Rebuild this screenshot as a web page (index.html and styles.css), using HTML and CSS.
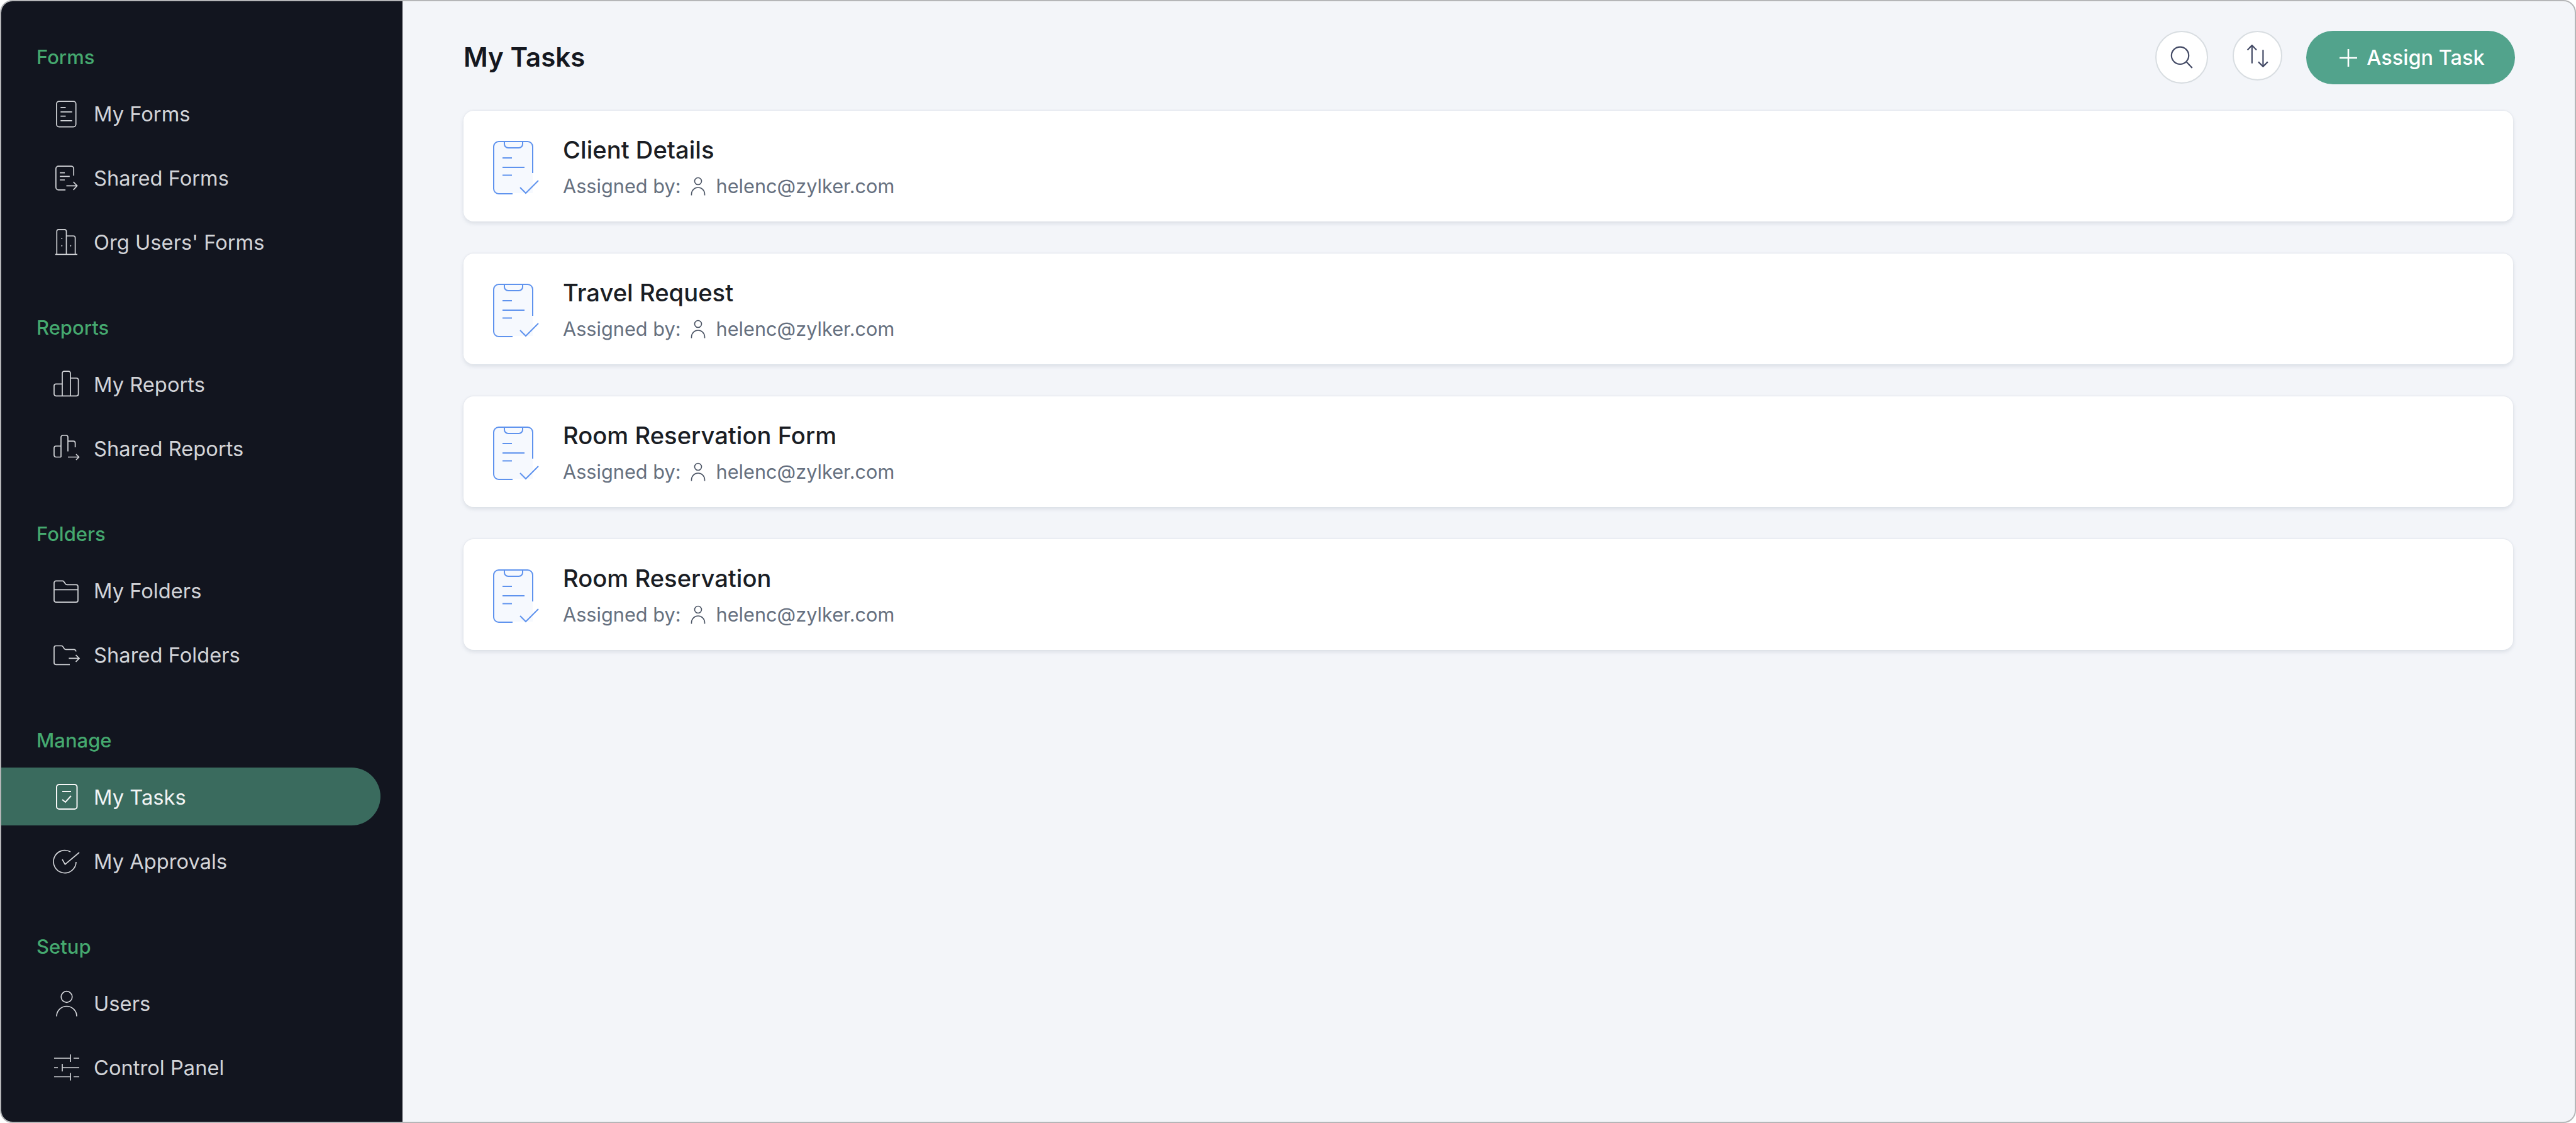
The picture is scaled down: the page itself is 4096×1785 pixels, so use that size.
FILE: index.html
```html
<!DOCTYPE html>
<html>
<head>
  <title>My Tasks</title>
  <link rel="stylesheet" href="styles.css">
</head>
<body>
  <div class="frame">
    <aside class="sidebar">
      <div class="nav-section">
        <div class="nav-label">Forms</div>
        <a class="nav-item"><svg class="nav-icon" viewBox="0 0 44 44"><rect x="5.900" y="2.100" width="30.800" height="40.500" rx="4"/><path d="M12.300 11.900h8.200M12.300 18.800h18.400M12.300 25.600h8.200M12.300 32.800h18.400"/></svg>My Forms</a>
        <a class="nav-item"><svg class="nav-icon" viewBox="0 0 44 44"><path d="M33.200 18.300V7.100a4 4 0 0 0-4-4H8.900a4 4 0 0 0-4 4v29.700a4 4 0 0 0 4 4h11.200"/><path d="M11.100 13.600H19M11.100 19.300h15.700M11.100 25H19M21.500 34.300h17M32.600 28l6 6.300-6 6.500"/></svg>Shared Forms</a>
        <a class="nav-item"><svg class="nav-icon" viewBox="0 0 44 44"><path d="M3.900 41.300H39M6.300 41V4.800a3 3 0 0 1 3-3h9.200a3 3 0 0 1 3 3V41M21.500 12h11.100a3 3 0 0 1 3 3v26"/><path class="dot" d="M14.300 15.900v.1M14.300 27.600v.1M28.300 27.600v.1"/></svg>Org Users' Forms</a>
      </div>
      <div class="nav-section">
        <div class="nav-label">Reports</div>
        <a class="nav-item"><svg class="nav-icon" viewBox="0 0 44 44"><path d="M15 40.300H5a3 3 0 0 1-3-3V24.300a3 3 0 0 1 3-3h10M15 40.300V4.200a3 3 0 0 1 3-3h7a3 3 0 0 1 3 3v36.100M28 12h9.600a3 3 0 0 1 3 3v22.300a3 3 0 0 1-3 3H5"/></svg>My Reports</a>
        <a class="nav-item"><svg class="nav-icon" viewBox="0 0 44 44"><path d="M13 35.500H5a3 3 0 0 1-3-3V21a3 3 0 0 1 3-3h8M13 35.500V4a3 3 0 0 1 3-3h5a3 3 0 0 1 3 3v22.400M24 10.200h8.600a3 3 0 0 1 3 3V20M24 35.500h17.500M37 31l4.500 4.500-4.500 4.500"/></svg>Shared Reports</a>
      </div>
      <div class="nav-section">
        <div class="nav-label">Folders</div>
        <a class="nav-item"><svg class="nav-icon" viewBox="0 0 44 44"><path d="M2 20.300V9.400a3 3 0 0 1 3-3h10.500q1.200 0 2 1l2.500 3.600q1 1.300 2.300 1.300H37a3 3 0 0 1 3 3v21.900a3 3 0 0 1-3 3H5a3 3 0 0 1-3-3z"/><path d="M2 20.300h38"/></svg>My Folders</a>
        <a class="nav-item"><svg class="nav-icon" viewBox="0 0 44 44"><path d="M36.700 16.500a3 3 0 0 0-3-3.100H20.500q-1.300 0-2.200-1.100l-2.200-3.400q-.8-1.400-2.400-1.400H5a3 3 0 0 0-3 3v23.800a3 3 0 0 0 3 3h22"/><path d="M25.400 27.400H42M36.500 22.200l5.500 5.200-5.500 5.500"/></svg>Shared Folders</a>
      </div>
      <div class="nav-section">
        <div class="nav-label">Manage</div>
        <a class="nav-item active"><svg class="nav-icon" viewBox="0 0 44 44"><rect x="6" y="2" width="32.500" height="39" rx="4"/><path d="M15 13h14M15 26l5 4 9-10"/></svg>My Tasks</a>
        <a class="nav-item"><svg class="nav-icon" viewBox="0 0 44 44"><path d="M37 23a18 18 0 1 1-9-16"/><path d="M15 19l4.500 8L42 8"/></svg>My Approvals</a>
      </div>
      <div class="nav-section">
        <div class="nav-label">Setup</div>
        <a class="nav-item"><svg class="nav-icon" viewBox="0 0 44 44"><circle cx="22" cy="11.500" r="8.800"/><path d="M6 42.500a16 16 0 0 1 32 0"/></svg>Users</a>
        <a class="nav-item"><svg class="nav-icon" viewBox="0 0 44 44"><path d="M2 7h26M28 1v12M33 7h9M2 22h6M15 22h27M15 16v12M2 36.500h26M28 30.500v12M33 36.500h9"/></svg>Control Panel</a>
      </div>
    </aside>

    <main class="content">
      <header class="topbar">
        <h1>My Tasks</h1>
        <div class="actions">
          <button class="round-btn search-btn"><svg viewBox="0 0 36 36" class="tool-icon"><circle cx="15.500" cy="15.300" r="13.700"/><path d="M25.500 25.300l9.200 9.800"/></svg></button>
          <button class="round-btn sort-btn"><svg viewBox="0 0 36 36" class="tool-icon"><path d="M8.800 29.700V1M1.600 8.400L8.800 1 16 8.400M26.400 8.200v26.600M19 27.400l7.400 7.400 7.400-7.400"/></svg></button>
          <button class="assign-btn"><svg viewBox="0 0 30 30" class="plus-icon"><path d="M15 1v28M1 15h28"/></svg>Assign Task</button>
        </div>
      </header>

      <section class="task-list">
        <div class="task-card">
          <svg class="task-icon" viewBox="0 0 76 88"><path class="paper" d="M2 10a8 8 0 0 1 8-8h46a8 8 0 0 1 8 8v74H10a8 8 0 0 1-8-8z"/><path d="M32 85H10a8 8 0 0 1-8-8V10a8 8 0 0 1 8-8h46a8 8 0 0 1 8 8v42M19 2v4a6 6 0 0 0 6 6h17a6 6 0 0 0 6-6V2M16 28h15M16 43h35M16 55.500h15M44 75l9 9 20-20"/></svg>
          <div class="task-text">
            <div class="task-name">Client Details</div>
            <div class="task-meta">Assigned by:<svg class="meta-icon" viewBox="0 0 24 30"><circle cx="12" cy="7" r="5.500"/><path d="M1.500 29.500v-2a10.500 10.500 0 0 1 21 0v2"/></svg>helenc@zylker.com</div>
          </div>
        </div>
        <div class="task-card">
          <svg class="task-icon" viewBox="0 0 76 88"><path class="paper" d="M2 10a8 8 0 0 1 8-8h46a8 8 0 0 1 8 8v74H10a8 8 0 0 1-8-8z"/><path d="M32 85H10a8 8 0 0 1-8-8V10a8 8 0 0 1 8-8h46a8 8 0 0 1 8 8v42M19 2v4a6 6 0 0 0 6 6h17a6 6 0 0 0 6-6V2M16 28h15M16 43h35M16 55.500h15M44 75l9 9 20-20"/></svg>
          <div class="task-text">
            <div class="task-name">Travel Request</div>
            <div class="task-meta">Assigned by:<svg class="meta-icon" viewBox="0 0 24 30"><circle cx="12" cy="7" r="5.500"/><path d="M1.500 29.500v-2a10.500 10.500 0 0 1 21 0v2"/></svg>helenc@zylker.com</div>
          </div>
        </div>
        <div class="task-card">
          <svg class="task-icon" viewBox="0 0 76 88"><path class="paper" d="M2 10a8 8 0 0 1 8-8h46a8 8 0 0 1 8 8v74H10a8 8 0 0 1-8-8z"/><path d="M32 85H10a8 8 0 0 1-8-8V10a8 8 0 0 1 8-8h46a8 8 0 0 1 8 8v42M19 2v4a6 6 0 0 0 6 6h17a6 6 0 0 0 6-6V2M16 28h15M16 43h35M16 55.500h15M44 75l9 9 20-20"/></svg>
          <div class="task-text">
            <div class="task-name">Room Reservation Form</div>
            <div class="task-meta">Assigned by:<svg class="meta-icon" viewBox="0 0 24 30"><circle cx="12" cy="7" r="5.500"/><path d="M1.500 29.500v-2a10.500 10.500 0 0 1 21 0v2"/></svg>helenc@zylker.com</div>
          </div>
        </div>
        <div class="task-card">
          <svg class="task-icon" viewBox="0 0 76 88"><path class="paper" d="M2 10a8 8 0 0 1 8-8h46a8 8 0 0 1 8 8v74H10a8 8 0 0 1-8-8z"/><path d="M32 85H10a8 8 0 0 1-8-8V10a8 8 0 0 1 8-8h46a8 8 0 0 1 8 8v42M19 2v4a6 6 0 0 0 6 6h17a6 6 0 0 0 6-6V2M16 28h15M16 43h35M16 55.500h15M44 75l9 9 20-20"/></svg>
          <div class="task-text">
            <div class="task-name">Room Reservation</div>
            <div class="task-meta">Assigned by:<svg class="meta-icon" viewBox="0 0 24 30"><circle cx="12" cy="7" r="5.500"/><path d="M1.500 29.500v-2a10.500 10.500 0 0 1 21 0v2"/></svg>helenc@zylker.com</div>
          </div>
        </div>
      </section>
    </main>
  </div>
</body>
</html>
```

FILE: styles.css
```css
* {
  box-sizing: border-box;
}

html, body {
  margin: 0;
  height: 100%;
  background: #fff;
}

body {
  font-family: Inter, "Noto Sans", sans-serif;
  overflow: hidden;
}

svg {
  fill: none;
  flex-shrink: 0;
}

.frame {
  display: flex;
  height: 100vh;
  border: 2px solid #b5b6b8;
  border-radius: 20px;
  overflow: hidden;
  background: #f3f5f9;
}

/* Sidebar */
.sidebar {
  width: 638px;
  flex-shrink: 0;
  padding-top: 67px;
  background: #12151f;
  display: flex;
  flex-direction: column;
  gap: 69px;
}

.nav-section {
  display: flex;
  flex-direction: column;
  gap: 10px;
}

.nav-label {
  height: 40px;
  line-height: 43px;
  margin-bottom: 15px;
  padding-left: 56px;
  font-size: 31px;
  font-weight: 500;
  color: #45a96f;
}

.nav-item {
  display: flex;
  align-items: center;
  gap: 21px;
  width: 603px;
  height: 92px;
  padding: 2px 0 0 82px;
  border-radius: 0 46px 46px 0;
  font-size: 32.7px;
  color: #d2d4d8;
}

.nav-item.active {
  background: #3a6b5e;
  color: #f2f4f4;
}

.nav-icon {
  width: 44px;
  height: 44px;
  stroke: #d2d4d8;
  stroke-width: 1.7;
}

.nav-icon .dot {
  stroke-width: 2;
  stroke-linecap: round;
}

.active .nav-icon {
  stroke: #f5f6f6;
  stroke-width: 2;
}

/* Main area */
.content {
  flex: 1;
  padding: 47px 98px 0 97px;
}

.topbar {
  display: flex;
  justify-content: space-between;
  align-items: flex-start;
  height: 85px;
  margin-bottom: 42px;
}

.topbar h1 {
  margin: 0;
  line-height: 84px;
  font-size: 42px;
  font-weight: 600;
  color: #14171f;
}

.actions {
  display: flex;
  margin-right: -3px;
}

.round-btn {
  display: flex;
  align-items: center;
  justify-content: center;
  padding: 0;
  background: #fff;
  border: 2px solid #d8dde1;
  border-radius: 50%;
}

.search-btn {
  width: 84px;
  height: 84px;
  margin-right: 39px;
}

.sort-btn {
  width: 79px;
  height: 79px;
  margin-right: 38px;
}

.tool-icon {
  width: 36px;
  height: 36px;
  stroke: #444b66;
  stroke-width: 2.2;
}

.assign-btn {
  display: flex;
  align-items: center;
  justify-content: center;
  gap: 14px;
  width: 332px;
  height: 85px;
  padding-right: 2px;
  border: none;
  border-radius: 43px;
  background: #52a38c;
  color: #fff;
  font-family: inherit;
  font-size: 32.5px;
  font-weight: 500;
}

.plus-icon {
  width: 30px;
  height: 30px;
  stroke: #fff;
  stroke-width: 2.6;
}

/* Task cards */
.task-list {
  display: flex;
  flex-direction: column;
  gap: 51px;
}

.task-card {
  display: flex;
  align-items: center;
  gap: 36px;
  height: 176px;
  padding: 4px 0 0 46px;
  background: #fff;
  border-radius: 16px;
  box-shadow: 0 3px 6px rgba(100, 116, 139, 0.18), 0 -1px 2px rgba(100, 116, 139, 0.08);
}

.task-icon {
  width: 76px;
  height: 88px;
  margin-top: 2px;
  stroke: #5f93ee;
  stroke-width: 2;
}

.task-icon .paper {
  stroke: none;
  fill: #f6f9fe;
}

.task-name {
  margin-bottom: 16px;
  line-height: 44px;
  font-size: 38.2px;
  font-weight: 500;
  color: #1a1d24;
}

.task-meta {
  display: flex;
  align-items: center;
  line-height: 40px;
  font-size: 30.7px;
  color: #66707f;
}

.meta-icon {
  width: 24px;
  height: 30px;
  margin: 0 17px 0 15px;
  stroke: #4d5666;
  stroke-width: 1.6;
}
```
